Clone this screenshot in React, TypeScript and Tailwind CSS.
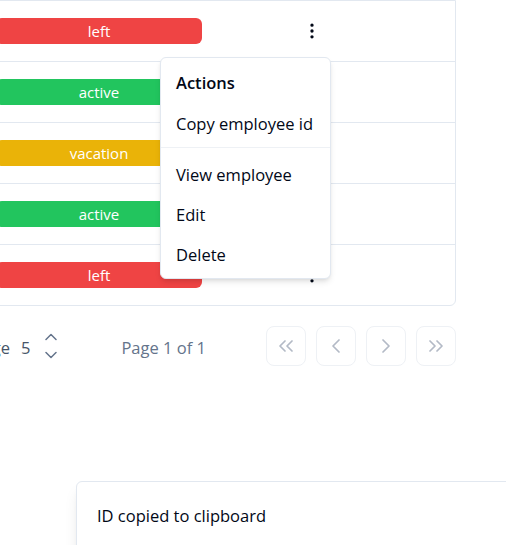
import React from 'react';
import { MoreVertical, ChevronsLeft, ChevronLeft, ChevronRight, ChevronsRight } from 'lucide-react';

type Status = 'left' | 'active' | 'vacation';

const rows: { id: number; status: Status }[] = [
  { id: 1, status: 'left' },
  { id: 2, status: 'active' },
  { id: 3, status: 'vacation' },
  { id: 4, status: 'active' },
  { id: 5, status: 'left' },
];

const badgeColors: Record<Status, string> = {
  left: 'bg-[#ef4444]',
  active: 'bg-[#22c55e]',
  vacation: 'bg-[#eab308]',
};

function StatusBadge({ status }: { status: Status }) {
  return (
    <div
      className={`flex h-[26px] w-[206px] shrink-0 items-center justify-center rounded-md text-[15px] text-white ${badgeColors[status]}`}
    >
      {status}
    </div>
  );
}

function ActionsMenu() {
  return (
    <div className="absolute left-[160px] top-[57px] w-[171px] whitespace-nowrap rounded-md border border-[#e2e8f0] bg-white pb-[3px] pt-[5px] text-[#020817] shadow-md">
      <div className="flex h-10 items-center px-[15px] font-semibold">Actions</div>
      <div className="mt-px flex h-10 items-center px-[15px]">Copy employee id</div>
      <div className="mb-[7px] mt-[3px] h-px bg-[#eef1f5]" />
      <div className="flex h-10 items-center px-[15px]">View employee</div>
      <div className="flex h-10 items-center px-[15px]">Edit</div>
      <div className="flex h-10 items-center px-[15px]">Delete</div>
    </div>
  );
}

function PageButton({ children }: { children: React.ReactNode }) {
  return (
    <button className="flex h-10 w-10 items-center justify-center rounded-lg border border-[#eef1f5] bg-white text-[#b3bac6]">
      {children}
    </button>
  );
}

export default function App() {
  return (
    <div className="relative h-[545px] overflow-hidden bg-white font-['Open_Sans',sans-serif] text-[16.5px]">
      <div className="-ml-[150px] w-[606px]">
        <div className="rounded-b-md border border-[#e2e8f0]">
          {rows.map((row) => (
            <div key={row.id} className="flex h-[61px] items-center border-b border-[#e2e8f0] last:h-[60px] last:border-b-0">
              <div className="w-[145px] shrink-0" />
              <StatusBadge status={row.status} />
              <button className="ml-[100px] text-[#020817]">
                <MoreVertical size={20} />
              </button>
            </div>
          ))}
        </div>

        <div className="mt-5 flex h-10 items-center">
          <div className="mt-1 w-[160px] text-right text-[#475569]">Rows per page</div>
          <div className="ml-[11px] mt-1 text-[#475569]">5</div>
          <svg className="ml-[15px]" width="12" height="26" viewBox="0 0 12 26" fill="none" stroke="#64748b" strokeWidth="1.5" strokeLinecap="round" strokeLinejoin="round">
            <path d="M1 6.5 6 1.5l5 5" />
            <path d="M1 19.5l5 5 5-5" />
          </svg>
          <div className="ml-[64px] mt-1 text-[#64748b]">Page 1 of 1</div>
          <div className="ml-auto flex gap-[10px]">
            <PageButton><ChevronsLeft size={24} strokeWidth={1.75} /></PageButton>
            <PageButton><ChevronLeft size={24} strokeWidth={1.75} /></PageButton>
            <PageButton><ChevronRight size={24} strokeWidth={1.75} /></PageButton>
            <PageButton><ChevronsRight size={24} strokeWidth={1.75} /></PageButton>
          </div>
        </div>
      </div>

      <ActionsMenu />

      <div className="absolute left-[76px] top-[481px] h-[100px] w-[460px] rounded-md border border-[#e2e8f0] bg-white px-5 pt-[22px] text-[#020817] shadow-lg">
        ID copied to clipboard
      </div>
    </div>
  );
}
